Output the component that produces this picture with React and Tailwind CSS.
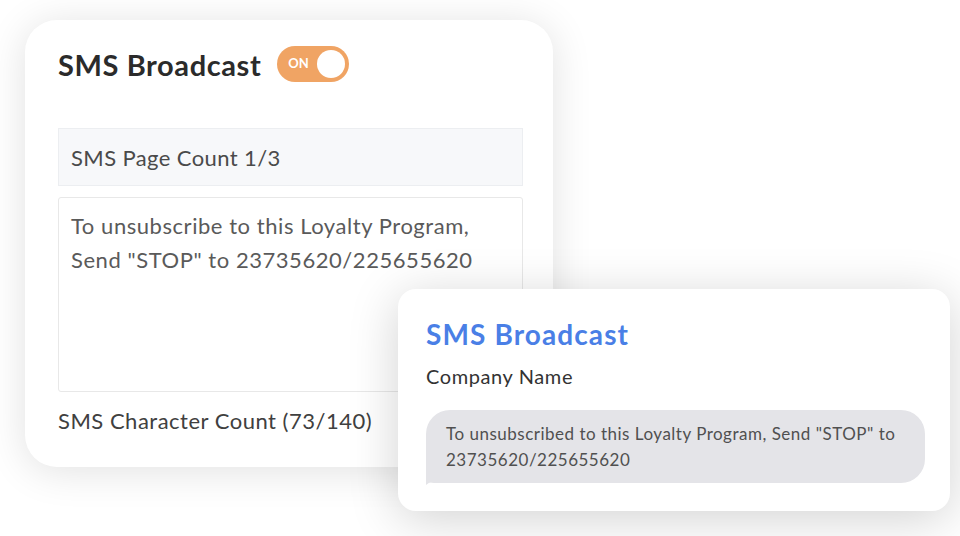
import React from 'react';

const App = () => {
  return (
    <div className="relative w-[960px] h-[536px] bg-white overflow-hidden font-['Lato','Noto_Sans',sans-serif]">
      {/* Editor card */}
      <div className="absolute left-[25px] top-[20px] w-[528px] h-[447px] bg-white rounded-[32px] shadow-[0_4px_40px_rgba(0,0,0,0.12)] pl-[33px] pr-[30px] pt-[26px]">
        <div className="flex items-center gap-[16px]">
          <h2 className="text-[29px] font-bold text-[#2b2b2b] tracking-[0.6px] leading-none">SMS Broadcast</h2>
          <div className="w-[72px] h-[36px] rounded-full bg-[#f0a464] flex items-center justify-between pl-[11px] pr-[4px]">
            <span className="text-[13px] font-bold text-white">ON</span>
            <span className="w-[28px] h-[28px] rounded-full bg-white" />
          </div>
        </div>

        <div className="mt-[46px] h-[58px] bg-[#f7f8fa] border border-[#eceef1] flex items-center px-[12px]">
          <span className="text-[22px] tracking-[0.4px] text-[#4a4a4a]">SMS Page Count 1/3</span>
        </div>

        <div className="mt-[11px] h-[195px] border border-[#e8e8e8] rounded-[3px] px-[12px] pt-[11px]">
          <p className="text-[22px] leading-[34px] tracking-[0.55px] text-[#5a5a5a]">
            To unsubscribe to this Loyalty Program,<br />
            Send "STOP" to 23735620/225655620
          </p>
        </div>

        <p className="mt-[12px] text-[22px] tracking-[0.5px] text-[#404040]">SMS Character Count (73/140)</p>
      </div>

      {/* Preview card */}
      <div className="absolute left-[398px] top-[289px] w-[552px] h-[222px] bg-white rounded-[18px] shadow-[0_8px_50px_rgba(0,0,0,0.18)] px-[28px] pt-[31px]">
        <h3 className="text-[28px] font-bold text-[#4a7fe6] leading-none tracking-[1.1px]">SMS Broadcast</h3>
        <p className="mt-[13px] text-[20px] tracking-[0.6px] text-[#333]">Company Name</p>
        <div className="relative mt-[19px] w-[499px] h-[73px] bg-[#e4e4e8] rounded-[24px] rounded-bl-[8px] px-[20px] pt-[11px]">
          <p className="text-[17px] leading-[26px] tracking-[0.5px] text-[#505050]">
            To unsubscribed to this Loyalty Program, Send "STOP" to<br />
            23735620/225655620
          </p>
          <svg className="absolute left-0 bottom-[-2px]" width="14" height="10" viewBox="0 0 14 10">
            <path d="M0 0 L0 10 Q4 6 9 8 Q4 4 4 0 Z" fill="#e4e4e8" />
          </svg>
        </div>
      </div>
    </div>
  );
};

export default App;
